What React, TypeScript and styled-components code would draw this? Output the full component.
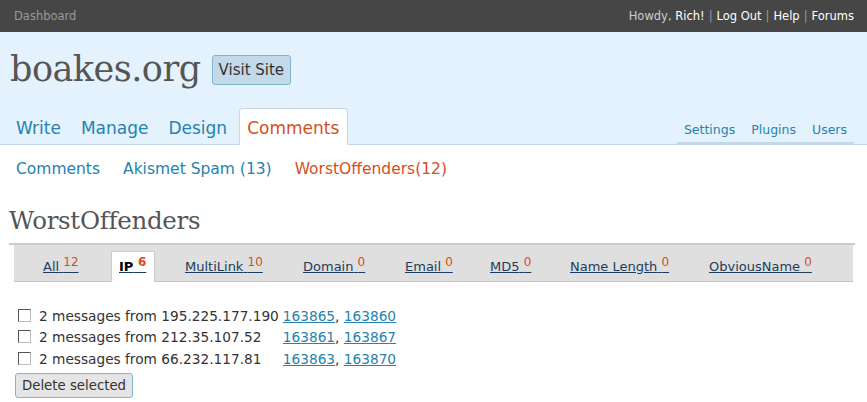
import React from "react";
import styled, { createGlobalStyle } from "styled-components";

const Global = createGlobalStyle`
  html, body { margin: 0; padding: 0; background: #fff; }
  body { font-family: "DejaVu Sans", "Liberation Sans", sans-serif; color: #333; }
`;

const TopBar = styled.div`
  height: 32px;
  background: #464646;
  display: flex;
  align-items: center;
  justify-content: space-between;
  padding: 0 13px 0 14px;
  font-size: 11.5px;
`;
const DashLink = styled.span`color: #999;`;
const UserLinks = styled.div`
  color: #ccc;
  display: flex;
  gap: 4px;
`;
const TopLink = styled.span`color: #fff;`;
const Sep = styled.span`color: #999;`;

const Head = styled.div`
  background: #e4f2fd;
  border-bottom: 1px solid #c6d9e9;
  height: 112px;
  display: flex;
  flex-direction: column;
  justify-content: space-between;
`;
const TitleRow = styled.div`
  display: flex;
  align-items: center;
  gap: 11px;
  padding: 17px 0 0 10px;
`;
const SiteTitle = styled.h1`
  margin: 0;
  font-family: "DejaVu Serif", Georgia, serif;
  font-weight: normal;
  font-size: 35px;
  color: #555;
  letter-spacing: -0.5px;
`;
const VisitButton = styled.span`
  display: inline-block;
  background: #c3d9e9;
  border: 1px solid #80b5d0;
  border-radius: 3px;
  color: #333;
  font-size: 15px;
  padding: 5px 6px 5px 6px;
  margin-top: 2px;
`;
const MenuRow = styled.div`
  display: flex;
  justify-content: space-between;
  align-items: flex-end;
  padding: 0 13px 0 6px;
`;
const MainMenu = styled.div`display: flex; align-items: flex-end;`;
const MainTab = styled.span<{ $active?: boolean }>`
  font-size: 17px;
  padding: 9px ${p => (p.$active ? "8px 6px 7px" : "9px 6px")};
  margin-bottom: -1px;
  ${p => (p.$active ? "margin-left: 2px;" : "")}
  color: ${p => (p.$active ? "#d54e21" : "#2583ad")};
  background: ${p => (p.$active ? "#fff" : "transparent")};
  border: 1px solid ${p => (p.$active ? "#c6d9e9" : "transparent")};
  border-bottom: 1px solid ${p => (p.$active ? "#fff" : "transparent")};
  border-radius: 3px 3px 0 0;
`;
const SideMenu = styled.div`
  display: flex;
  border-bottom: 2px solid #c6d9e9;
  padding: 0 7px 5px;
  gap: 16px;
`;
const SideTab = styled.span`
  font-size: 12.5px;
  color: #2583ad;
`;

const SubMenu = styled.div`
  display: flex;
  gap: 23px;
  padding: 15px 16px 0;
  font-size: 15.5px;
`;
const SubLink = styled.span<{ $active?: boolean }>`
  color: ${p => (p.$active ? "#d54e21" : "#2583ad")};
`;

const Wrap = styled.div`padding: 0 12px 0 9px;`;
const PageTitle = styled.h2`
  margin: 28px 0 0;
  font-family: "DejaVu Serif", Georgia, serif;
  font-weight: normal;
  font-size: 24.5px;
  color: #555;
  letter-spacing: -0.3px;
  padding-bottom: 8px;
  border-bottom: 2px solid #ccc;
`;
const TabBar = styled.div`
  margin: 0 2px 0 5px;
  background: #dfdfdf;
  border-bottom: 1px solid #c6c6c6;
  height: 36px;
  display: flex;
  align-items: flex-end;
  padding-left: 17px;
`;
const FilterTab = styled.span<{ $active?: boolean; $w: number }>`
  width: ${p => p.$w}px;
  box-sizing: border-box;
  height: 31px;
  margin-bottom: -1px;
  padding: 7px 0 0 ${p => (p.$active ? 7 : 11)}px;
  font-size: 13px;
  background: ${p => (p.$active ? "#fff" : "transparent")};
  border: 1px solid ${p => (p.$active ? "#ccc" : "transparent")};
  border-bottom: none;
  ${p => (p.$active ? "margin-right: 18px;" : "")}
`;
const FilterLink = styled.span<{ $active?: boolean }>`
  color: ${p => (p.$active ? "#000" : "#1d3c5c")};
  font-weight: ${p => (p.$active ? "bold" : "normal")};
  text-decoration: underline;
  text-decoration-color: #1d3c5c;
  white-space: nowrap;
`;
const Count = styled.sup<{ $active?: boolean }>`
  color: #d54e21;
  font-size: 12px;
  font-weight: ${p => (p.$active ? "bold" : "normal")};
  vertical-align: 5px;
  line-height: 0;
`;

const List = styled.table`
  margin: 23px 0 0 5px;
  border-collapse: collapse;
  font-size: 13.7px;
  color: #333;
`;
const Row = styled.tr``;
const Cell = styled.td`
  padding: 0 4px 0 0;
  height: 21.5px;
  vertical-align: middle;
  white-space: nowrap;
`;
const Box = styled.span`
  display: inline-block;
  width: 11px;
  height: 11px;
  border: 1px solid #555;
  border-right-color: #bbb;
  border-bottom-color: #bbb;
  background: #fff;
  margin: 0 8px 0 4px;
  vertical-align: -1px;
`;
const NumLink = styled.span`
  color: #2583ad;
  text-decoration: underline;
`;
const DeleteButton = styled.span`
  display: inline-block;
  margin: 3px 0 0 6px;
  background: #e5e5e5;
  border: 1px solid #80b5d0;
  border-radius: 3px;
  font-size: 13.3px;
  color: #333;
  padding: 4px 6px;
`;

const tabs = [
  { label: "All", n: 12, w: 80 },
  { label: "IP", n: 6, w: 44, active: true },
  { label: "MultiLink", n: 10, w: 118 },
  { label: "Domain", n: 0, w: 102 },
  { label: "Email", n: 0, w: 85 },
  { label: "MD5", n: 0, w: 80 },
  { label: "Name Length", n: 0, w: 139 },
  { label: "ObviousName", n: 0, w: 120 },
];

const rows = [
  { ip: "195.225.177.190", a: "163865", b: "163860" },
  { ip: "212.35.107.52", a: "163861", b: "163867" },
  { ip: "66.232.117.81", a: "163863", b: "163870" },
];

export default function App() {
  return (
    <>
      <Global />
      <TopBar>
        <DashLink>Dashboard</DashLink>
        <UserLinks>
          <span>Howdy, <TopLink>Rich!</TopLink></span>
          <Sep>|</Sep>
          <TopLink>Log Out</TopLink>
          <Sep>|</Sep>
          <TopLink>Help</TopLink>
          <Sep>|</Sep>
          <TopLink>Forums</TopLink>
        </UserLinks>
      </TopBar>
      <Head>
        <TitleRow>
          <SiteTitle>boakes.org</SiteTitle>
          <VisitButton>Visit Site</VisitButton>
        </TitleRow>
        <MenuRow>
          <MainMenu>
            <MainTab>Write</MainTab>
            <MainTab>Manage</MainTab>
            <MainTab>Design</MainTab>
            <MainTab $active>Comments</MainTab>
          </MainMenu>
          <SideMenu>
            <SideTab>Settings</SideTab>
            <SideTab>Plugins</SideTab>
            <SideTab>Users</SideTab>
          </SideMenu>
        </MenuRow>
      </Head>
      <SubMenu>
        <SubLink>Comments</SubLink>
        <SubLink>Akismet Spam (13)</SubLink>
        <SubLink $active>WorstOffenders(12)</SubLink>
      </SubMenu>
      <Wrap>
        <PageTitle>WorstOffenders</PageTitle>
        <TabBar>
          {tabs.map(t => (
            <FilterTab key={t.label} $active={t.active} $w={t.w}>
              <FilterLink $active={t.active}>
                {t.label} <Count $active={t.active}>{t.n}</Count>
              </FilterLink>
            </FilterTab>
          ))}
        </TabBar>
        <List>
          <tbody>
            {rows.map(r => (
              <Row key={r.ip}>
                <Cell><Box />2 messages from {r.ip}</Cell>
                <Cell><NumLink>{r.a}</NumLink>, <NumLink>{r.b}</NumLink></Cell>
              </Row>
            ))}
          </tbody>
        </List>
        <DeleteButton>Delete selected</DeleteButton>
      </Wrap>
    </>
  );
}
